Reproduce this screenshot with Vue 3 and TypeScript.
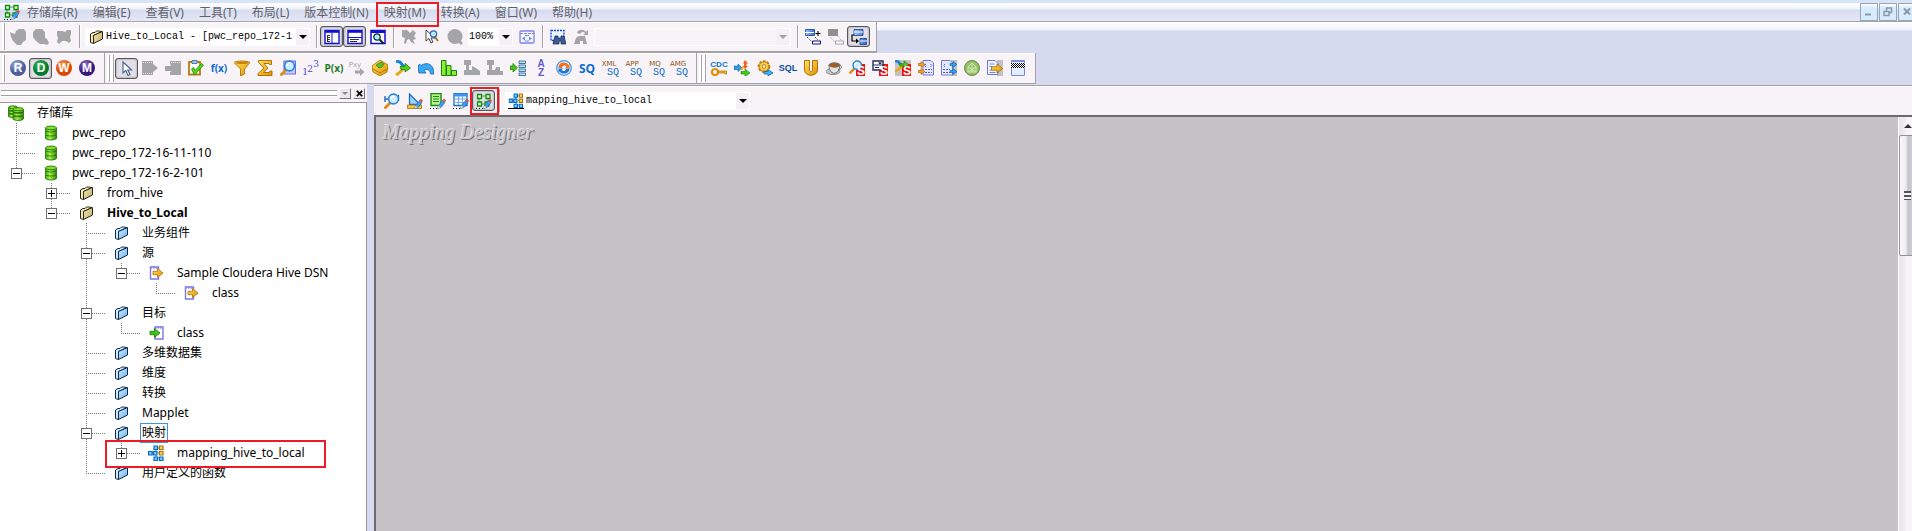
<script setup lang="ts">
import { computed, h, ref } from 'vue'

interface TreeNode {
  label: string
  icon: string
  bold?: boolean
  selected?: boolean
  marked?: boolean
  open?: boolean
  children?: TreeNode[]
}

interface TreeRow {
  node: TreeNode
  depth: number
  guides: string[]
}

interface Tool {
  icon: string
  title: string
  pressed?: boolean
}

interface Letter {
  text: string
  x: number
  y: number
  kind: string
}

const sq = (name: string): Letter[] => [
  { text: name, x: 7, y: 6, kind: 'l-tiny l-brown' },
  { text: 'SQ', x: 11, y: 15, kind: 'l-small l-blue' },
]

// Lettering drawn on top of an icon's shape, in icon units; text is centred on x.
const letters: Record<string, Letter[]> = {
  'app-r': [{ text: 'R', x: 8, y: 12, kind: 'l-app' }],
  'app-d': [{ text: 'D', x: 8, y: 12, kind: 'l-app' }],
  'app-w': [{ text: 'W', x: 8, y: 12, kind: 'l-app' }],
  'app-m': [{ text: 'M', x: 8, y: 12, kind: 'l-app' }],
  fx: [{ text: 'f(x)', x: 8, y: 12, kind: 'l-fn l-blue' }],
  px: [{ text: 'P(x)', x: 8, y: 12, kind: 'l-fn l-green' }],
  pxy: [{ text: 'Pxy', x: 6, y: 7, kind: 'l-tiny l-off' }],
  sequence: [
    { text: '1', x: 2, y: 15, kind: 'l-num' },
    { text: '2', x: 7, y: 12, kind: 'l-num' },
    { text: '3', x: 13, y: 7, kind: 'l-num' },
  ],
  az: [
    { text: 'A', x: 8, y: 7, kind: 'l-az' },
    { text: 'Z', x: 8, y: 16, kind: 'l-az' },
  ],
  sq: [{ text: 'SQ', x: 8, y: 13, kind: 'l-sq' }],
  'sq-xml': sq('XML'),
  'sq-app': sq('APP'),
  'sq-mq': sq('MQ'),
  'sq-amg': sq('AMG'),
  cdc: [{ text: 'CDC', x: 8, y: 7, kind: 'l-cdc' }],
  sql: [{ text: 'SQL', x: 8, y: 11, kind: 'l-sql' }],
  'lookup-s': [{ text: 'S', x: 12, y: 15, kind: 'l-s' }],
  'form-s': [{ text: 'S', x: 12, y: 15, kind: 'l-s' }],
  'merge-s': [{ text: 'S', x: 12, y: 15, kind: 'l-s' }],
}

const Icon = (props: { name: string }) =>
  h('svg', { class: 'ico', viewBox: '0 0 16 16', 'aria-hidden': 'true' }, [
    h('use', { href: '#' + props.name }),
    ...(letters[props.name] ?? []).map((l) =>
      h('text', { x: l.x, y: l.y, class: l.kind, 'text-anchor': 'middle' }, l.text),
    ),
  ])

const menus = [
  '存储库(R)', '编辑(E)', '查看(V)', '工具(T)', '布局(L)',
  '版本控制(N)', '映射(M)', '转换(A)', '窗口(W)', '帮助(H)',
]
const markedMenu = '映射(M)'

const tool = (icon: string, title: string, pressed = false): Tool => ({ icon, title, pressed })

const connectTools = [tool('hand', 'Connect'), tool('hand2', 'Disconnect'), tool('hand3', 'Save')]
const viewTools = [
  tool('navigator', 'Navigator', true),
  tool('output', 'Output', true),
  tool('overview', 'Overview'),
]
const zoomTools = [tool('select-off', 'Select'), tool('zoom-select', 'Zoom'), tool('ball', 'Zoom out')]
const findTools = [tool('find', 'Find'), tool('find-next', 'Find next')]
const linkTools = [
  tool('link-add', 'Add link'),
  tool('link-off', 'Remove link'),
  tool('link-show', 'Show links', true),
]

const appTools = [
  tool('app-r', 'Repository Manager'),
  tool('app-d', 'Designer', true),
  tool('app-w', 'Workflow Manager'),
  tool('app-m', 'Workflow Monitor'),
]
const transformTools = [
  tool('cursor', 'Select', true), tool('source-off', 'Source'), tool('target-off', 'Target'),
  tool('check', 'Validate'), tool('fx', 'Expression'), tool('filter', 'Filter'),
  tool('sigma', 'Aggregator'), tool('lookup', 'Lookup'), tool('sequence', 'Sequence'),
  tool('px', 'Procedure'), tool('pxy', 'External procedure'), tool('box', 'Joiner'),
  tool('router', 'Router'), tool('undo', 'Update strategy'), tool('rank', 'Rank'),
  tool('norm-off', 'Normalizer'), tool('norm-off2', 'Mapplet input'), tool('rows', 'Mapplet output'),
  tool('az', 'Sorter'), tool('globe', 'Transaction'), tool('sq', 'Source qualifier'),
  tool('sq-xml', 'XML source qualifier'), tool('sq-app', 'Application source qualifier'),
  tool('sq-mq', 'MQ source qualifier'), tool('sq-amg', 'AMG source qualifier'),
]
const customTools = [
  tool('cdc', 'CDC'), tool('cross', 'Custom'), tool('gear', 'Service'), tool('sql', 'SQL'),
  tool('union', 'Union'), tool('cup', 'Java'), tool('lookup-s', 'SAP lookup'),
  tool('form-s', 'SAP form'), tool('merge-s', 'SAP merge'), tool('xml-in', 'XML parser'),
  tool('xml-out', 'XML generator'), tool('mask', 'Masking'), tool('export', 'Export'),
  tool('unstructured', 'Unstructured data'),
]
const designerTools = [
  tool('src-analyzer', 'Source Analyzer'),
  tool('target-designer', 'Target Designer'),
  tool('trans-dev', 'Transformation Developer'),
  tool('mapplet-designer', 'Mapplet Designer'),
]

const tree = ref<TreeNode>({
  label: '存储库', icon: 'db2', open: true,
  children: [
    { label: 'pwc_repo', icon: 'db' },
    { label: 'pwc_repo_172-16-11-110', icon: 'db' },
    {
      label: 'pwc_repo_172-16-2-101', icon: 'db', open: true,
      children: [
        { label: 'from_hive', icon: 'folder', open: false, children: [] },
        {
          label: 'Hive_to_Local', icon: 'folder', bold: true, open: true,
          children: [
            { label: '业务组件', icon: 'folder-blue' },
            {
              label: '源', icon: 'folder-blue', open: true,
              children: [
                {
                  label: 'Sample Cloudera Hive DSN', icon: 'src', open: true,
                  children: [{ label: 'class', icon: 'src' }],
                },
              ],
            },
            {
              label: '目标', icon: 'folder-blue', open: true,
              children: [{ label: 'class', icon: 'tgt' }],
            },
            { label: '多维数据集', icon: 'folder-blue' },
            { label: '维度', icon: 'folder-blue' },
            { label: '转换', icon: 'folder-blue' },
            { label: 'Mapplet', icon: 'folder-blue' },
            {
              label: '映射', icon: 'folder-blue', selected: true, open: true,
              children: [
                { label: 'mapping_hive_to_local', icon: 'mapping', marked: true, open: false, children: [] },
              ],
            },
            { label: '用户定义的函数', icon: 'folder-blue' },
          ],
        },
      ],
    },
  ],
})

function flatten(node: TreeNode, depth: number, guides: string[], trail: string[]): TreeRow[] {
  const rows: TreeRow[] = [{ node, depth, guides }]
  if (!node.open) return rows
  const kids = node.children ?? []
  kids.forEach((kid, i) => {
    const last = i === kids.length - 1
    rows.push(
      ...flatten(kid, depth + 1, [...trail, last ? 'end' : 'tee'], [...trail, last ? 'none' : 'line']),
    )
  })
  return rows
}

const rows = computed(() => flatten(tree.value, 0, [], []))
</script>

<template>
  <div class="app">
    <svg class="defs" aria-hidden="true">
      <defs>
        <linearGradient id="g-green" x1="0" x2="1"><stop offset="0" stop-color="#3cb30a" /><stop offset=".4" stop-color="#a6f04a" /><stop offset="1" stop-color="#2a8a06" /></linearGradient>
        <linearGradient id="g-tan" x1="0" x2="1" y2="1"><stop offset="0" stop-color="#f2ecc4" /><stop offset="1" stop-color="#bfa95c" /></linearGradient>
        <linearGradient id="g-blue" x1="0" x2="1" y2="1"><stop offset="0" stop-color="#d6efff" /><stop offset="1" stop-color="#5fb0f0" /></linearGradient>
        <linearGradient id="g-gold" x1="0" x2="1" y2="1"><stop offset="0" stop-color="#ffe25a" /><stop offset="1" stop-color="#e09000" /></linearGradient>
        <linearGradient id="g-win" x1="0" x2="1"><stop offset="0" stop-color="#a9c6fa" /><stop offset="1" stop-color="#3264cc" /></linearGradient>
        <radialGradient id="g-r" cx=".4" cy=".3"><stop offset="0" stop-color="#a9b8e0" /><stop offset="1" stop-color="#4a5c9c" /></radialGradient>
        <radialGradient id="g-d" cx=".4" cy=".3"><stop offset="0" stop-color="#3cbc5c" /><stop offset="1" stop-color="#057a2c" /></radialGradient>
        <radialGradient id="g-w" cx=".4" cy=".3"><stop offset="0" stop-color="#ff9a4c" /><stop offset="1" stop-color="#d84800" /></radialGradient>
        <radialGradient id="g-m" cx=".4" cy=".3"><stop offset="0" stop-color="#9474c8" /><stop offset="1" stop-color="#38167c" /></radialGradient>
      </defs>

      <!-- shared parts -->
      <symbol id="p-pencil" viewBox="0 0 16 16"><path d="M7.500 15.500l1-3 4-5 2.500 2-4 5z" fill="#3b9cf0" stroke="#1560b0" stroke-width=".6" /><path d="M12.500 7.500l1.300-1.700 2.200 1.700-1.200 1.800z" fill="#f04a28" /><path d="M7.500 15.500l1-3 2 2z" fill="#f7d9a0" /></symbol>
      <symbol id="p-dots" viewBox="0 0 16 16"><path d="M0 15h1v1H0zM3 15h1v1H3zM6 15h1v1H6z" fill="#000" /></symbol>
      <symbol id="p-lens" viewBox="0 0 16 16"><path d="M1.500 14.500L6 10" stroke="#d89020" stroke-width="3" stroke-linecap="round" /><circle cx="9.500" cy="6" r="4.900" fill="#cdeeff" stroke="#2a84d8" stroke-width="1.600" /><path d="M7 6a3 3 0 0 1 3-3" stroke="#fff" fill="none" stroke-width="1.400" /></symbol>

      <symbol id="designer" viewBox="0 0 16 16"><path d="M5 3h6M3 5v5M12 5v4M5 11h4" stroke="#38a838" stroke-width="1" /><g fill="#dff8d0" stroke="#128a12" stroke-width="1.300"><path d="M1.500 1.500h4v4h-4zM10 1.500h4v4h-4zM1.500 9h4v4h-4zM9 9h4v4H9z" /></g><use href="#p-pencil" /><use href="#p-dots" /></symbol>
      <symbol id="mapping" viewBox="0 0 16 16"><path d="M4 8h3M8 3v9M10 8h3M8 3h5M8 13h5" stroke="#5c7ca0" /><g stroke-width="1.200"><path d="M.600 6.500h3.500V10H.600zM5.500 6.500H9V10H5.500zM6 1h3.500v3.500H6zM6 12h3.500v3.500H6zM11.500 12H15v3.500h-3.500z" fill="#6fd0ff" stroke="#0a6cc0" /><path d="M11.500 1H15v3.500h-3.500zM11.500 6.500H15V10h-3.500z" fill="#ffd870" stroke="#a87408" /></g></symbol>
      <symbol id="db" viewBox="0 0 16 16"><g stroke="#1f6a04" stroke-width=".8" fill="url(#g-green)"><path d="M2.500 10v3.500c2 2 9 2 11 0V10z" /><path d="M2.500 6v3.500c2 2 9 2 11 0V6z" /><path d="M2.500 3v2.500c2 2 9 2 11 0V3z" /><ellipse cx="8" cy="2.900" rx="5.500" ry="1.900" fill="#7fe02c" /></g></symbol>
      <symbol id="db2" viewBox="0 0 16 16"><g stroke="#1f6a04" stroke-width=".8" fill="url(#g-green)"><path d="M.500 8.500v3c1.500 1.500 7 1.500 8.500 0v-3zM.500 5.500v2.800c1.500 1.500 7 1.500 8.500 0V5.500zM.500 2.500v2.800c1.500 1.500 7 1.500 8.500 0V2.500z" /><ellipse cx="5" cy="2.300" rx="4.500" ry="1.500" /><path d="M5 11v3c2 2 8.500 2 10.500 0v-3zM5 7.500v3c2 1.800 8.500 1.800 10.500 0v-3zM5 4.500V7c2 1.800 8.500 1.800 10.500 0V4.500z" /><ellipse cx="10.300" cy="4.200" rx="5.200" ry="1.600" fill="#7fe02c" /></g></symbol>
      <symbol id="folder" viewBox="0 0 16 16"><path d="M5.500 14.500l-3-1V5L5 3.500h2L8.500 2h2l3.500.500-8.500 4z" fill="#f0e8bc" stroke="#2c2810" /><path d="M5.500 6.500l9-4V10l-9 4.500z" fill="url(#g-tan)" stroke="#2c2810" /></symbol>
      <symbol id="folder-blue" viewBox="0 0 16 16"><path d="M5.500 14.500l-3-1V5L5 3.500h2L8.500 2h2l3.500.500-8.500 4z" fill="#cdeaff" stroke="#102848" /><path d="M5.500 6.500l9-4V10l-9 4.500z" fill="url(#g-blue)" stroke="#102848" /></symbol>
      <symbol id="src" viewBox="0 0 16 16"><path d="M2.500 2h8v12h-8z" fill="#fff" stroke="#7878e8" stroke-width="1.400" /><path d="M2.500 2.500h8" stroke="#8c8cf0" stroke-width="2.400" stroke-dasharray="1.500 1" /><path d="M5 6.300h4.500V3.500L15 8l-5.500 4.500V9.700H5z" fill="url(#g-gold)" stroke="#b06c00" stroke-width=".8" /></symbol>
      <symbol id="tgt" viewBox="0 0 16 16"><path d="M7 2h8v12H7z" fill="#fff" stroke="#7878e8" stroke-width="1.400" /><path d="M7 2.500h8" stroke="#8c8cf0" stroke-width="2.400" stroke-dasharray="1.500 1" /><path d="M2 6.300h4.500V3.500L12 8l-5.500 4.500V9.700H2z" fill="#44c414" stroke="#147a04" stroke-width=".8" /></symbol>

      <symbol id="hand" viewBox="0 0 16 16"><path d="M0 3l2 1 3 1 1-3 3-2h5l2 3v8l-3 2-2 3H7l-4-4-2-4z" fill="#a5a5a5" /></symbol>
      <symbol id="hand2" viewBox="0 0 16 16"><path d="M0 3l3-3h6l3 3v6l2 1 2 4-2 2-3-1H7l-4-3-3-4z" fill="#a5a5a5" /></symbol>
      <symbol id="hand3" viewBox="0 0 16 16"><path d="M1 2h5l3 1 2-2h4v4l-1 3 1 4-2 2-3-2H6l-3 3-2-2 1-4-1-3z" fill="#a5a5a5" /></symbol>
      <symbol id="navigator" viewBox="0 0 16 16"><path d="M1 1.500h14v13H1z" fill="#fff" stroke="#1010d0" stroke-width="1.400" /><path d="M1 2.500h14" stroke="#1010d0" stroke-width="2.600" /><path d="M8 4v10" stroke="#1010d0" /><path d="M3.500 6v7M4 6.500h2M4 8.500h2M4 10.500h2M4 12.500h2" stroke="#000" stroke-width=".8" /></symbol>
      <symbol id="output" viewBox="0 0 16 16"><path d="M1 1.500h14v13H1z" fill="#fff" stroke="#1010d0" stroke-width="1.400" /><path d="M1 2.500h14" stroke="#1010d0" stroke-width="2.600" /><path d="M1 8.500h14" stroke="#1010d0" /><path d="M3 10.500h9M3 12.500h7" stroke="#000" stroke-width=".8" /></symbol>
      <symbol id="overview" viewBox="0 0 16 16"><path d="M1 1.500h14v13H1z" fill="#fff" stroke="#1010d0" stroke-width="1.500" /><path d="M1 2.500h14" stroke="#1010d0" stroke-width="3" /><circle cx="7" cy="8" r="3.200" fill="#a8f0ff" stroke="#112233" stroke-width="1.200" /><path d="M9.500 10.500l4 4" stroke="#112233" stroke-width="2" /></symbol>
      <symbol id="select-off" viewBox="0 0 16 16"><path d="M1 1h5l3 3 3-3 3 3-2 3 2 3-3 1 2 4-4-2-2-3-2 1-1 4-2-1 1-5-3-1z" fill="#a5a5a5" /></symbol>
      <symbol id="zoom-select" viewBox="0 0 16 16"><path d="M2 1v11l3-2.500L7 14l2-1-2-4h4z" fill="#fff" stroke="#333" stroke-width=".9" /><path d="M11 8l3 4" stroke="#b06c28" stroke-width="2" /><circle cx="9.500" cy="5" r="3.200" fill="#bfe6ff" stroke="#2a64a8" stroke-width="1.200" /></symbol>
      <symbol id="ball" viewBox="0 0 16 16"><circle cx="8" cy="7.500" r="7.500" fill="#a5a5a5" /><path d="M11 11l4 4" stroke="#a5a5a5" stroke-width="3" /></symbol>
      <symbol id="fit" viewBox="0 0 16 16"><rect x="1" y="2" width="14" height="12" rx="1" fill="#f4f6ff" stroke="#7c84ec" stroke-width="1.300" /><path d="M1 4.500h14" stroke="#7c84ec" stroke-dasharray="3 1" /><path d="M6 7.500L3 9.500l3 2zM10 7.500l3 2-3 2z" fill="#7c84ec" /><path d="M6 6.500h4M6 12h4" stroke="#7c84ec" /></symbol>
      <symbol id="find" viewBox="0 0 16 16"><path d="M1 1.500h13v10H1z" fill="#e8f4ff" stroke="#1848d0" stroke-width="1.400" stroke-dasharray="2 1" /><path d="M5 7h3v2h3V7h3l2 8h-5v-3H9v3H3z" fill="#3c5c98" stroke="#122850" stroke-width=".7" /></symbol>
      <symbol id="find-next" viewBox="0 0 16 16"><path d="M4 4c1-4 7-4 9-1l2-2v5h-5l2-2c-1-2-4-1-5 1zM3 9l3-2h6l2 8h-4v-3H7v3H1z" fill="#a5a5a5" /></symbol>
      <symbol id="link-add" viewBox="0 0 16 16"><path d="M.500.500h9v6h-9z" fill="url(#g-win)" stroke="#12408c" stroke-width=".8" /><path d="M0 3.500h9" stroke="#fff" /><path d="M13 2v5M10.500 4.500h5" stroke="#000" /><path d="M2 8l5 5M10 8l3 3" stroke="#000" stroke-dasharray="1 1.500" /><path d="M7.500 12h8v3h-8z" fill="#fff" stroke="#101080" /></symbol>
      <symbol id="link-off" viewBox="0 0 16 16"><path d="M0 0h10v7H0z" fill="#909090" /><path d="M2 8l5 5M10 7l3 4" stroke="#a5a5a5" stroke-dasharray="1 1" /><path d="M7.500 12h8v3h-8z" fill="#fff" stroke="#a5a5a5" /></symbol>
      <symbol id="link-show" viewBox="0 0 16 16"><path d="M3 .500h9v6H3zM9 9.500h6.500v6H9z" fill="url(#g-win)" stroke="#12408c" stroke-width=".8" /><path d="M3 3h9M9 12h7" stroke="#fff" /><path d="M3 6H1v6h5" fill="none" stroke="#000" stroke-width="1.200" /><path d="M5 9.500l3 2.500-3 2.500z" /></symbol>

      <symbol id="app-r" viewBox="0 0 16 16"><circle cx="8" cy="8" r="8" fill="url(#g-r)" /></symbol>
      <symbol id="app-d" viewBox="0 0 16 16"><circle cx="8" cy="8" r="8" fill="url(#g-d)" /></symbol>
      <symbol id="app-w" viewBox="0 0 16 16"><circle cx="8" cy="8" r="8" fill="url(#g-w)" /></symbol>
      <symbol id="app-m" viewBox="0 0 16 16"><circle cx="8" cy="8" r="8" fill="url(#g-m)" /></symbol>

      <symbol id="cursor" viewBox="0 0 16 16"><path d="M4 2v11l2.800-2.500L9 15.500l2-1-2.200-4.500H12.500z" fill="#fff" stroke="#4c6c94" stroke-width="1.200" /></symbol>
      <symbol id="source-off" viewBox="0 0 16 16"><path d="M0 1h11v3l5 4-5 4v3H0z" fill="#a5a5a5" /><path d="M1 2.500h9M1 13.500h9" stroke="#e8e8e8" stroke-dasharray="1 1" /></symbol>
      <symbol id="target-off" viewBox="0 0 16 16"><path d="M5 1h11v14H5v-3l2-1H0V6h6L5 4z" fill="#a5a5a5" /><path d="M6 2.500h9" stroke="#e8e8e8" stroke-dasharray="1 1" /></symbol>
      <symbol id="check" viewBox="0 0 16 16"><path d="M1 2h11v12.500H1z" fill="#fff" stroke="#b87c10" stroke-width="1.800" /><path d="M4 .500h5v3H4z" fill="#9cc8f0" stroke="#2864a0" stroke-width=".8" /><path d="M3.500 9L6.500 15 15.500 5 13.500 3.500 7 10.500 5.500 7.500z" fill="#54dc14" stroke="#188404" stroke-width=".8" /></symbol>
      <symbol id="filter" viewBox="0 0 16 16"><path d="M0 2.500C2 .500 14 .500 16 2.500L10.500 9v5L6.500 16V9z" fill="url(#g-gold)" stroke="#a86800" stroke-width=".8" /><ellipse cx="8" cy="2.800" rx="6.500" ry="1.300" fill="#c88400" /></symbol>
      <symbol id="sigma" viewBox="0 0 16 16"><path d="M1.500.500h13v4h-2L12 3.500H7L11 8l-4.500 4.500h6l.5-1.500h2v4.500h-14v-2L7 8 1.500 2.500z" fill="url(#g-gold)" stroke="#a86800" stroke-width=".9" /></symbol>
      <symbol id="lookup" viewBox="0 0 16 16"><path d="M4 1h11.500v13H4z" fill="#c8ccff" stroke="#6c70e0" stroke-width="1.200" /><use href="#p-lens" /></symbol>
      <symbol id="pxy" viewBox="0 0 16 16"><path d="M6 10.500h5V8l4.500 4-4.500 4v-2.500H6z" fill="#a5a5a5" /></symbol>
      <symbol id="box" viewBox="0 0 16 16"><path d="M0 6l8-6 8 5-1 7-7 4-7-4z" fill="url(#g-gold)" stroke="#a86800" stroke-width=".8" /><path d="M4 5l5-3 3 2-2 3-3 1z" fill="#58bc28" stroke="#208008" stroke-width=".6" /><path d="M1 9l7 4 7-4" fill="none" stroke="#b07c08" /></symbol>
      <symbol id="router" viewBox="0 0 16 16"><path d="M1 1l4 1 4 5" fill="none" stroke="#1484dc" stroke-width="3" /><path d="M1 15l3-2 5-5" fill="none" stroke="#e8a810" stroke-width="3" /><path d="M5 6.500h5V3.500L15.500 8 10 12V9.500H6z" fill="#58cc20" stroke="#188404" stroke-width=".8" /></symbol>
      <symbol id="undo" viewBox="0 0 16 16"><path d="M0 6l1 7h7L6 10.500c3-2 6-1 6.500 3.500H16C16 5 10 1 3 5.500L1.500 4z" fill="#38a8f4" stroke="#0c64b4" stroke-width=".8" /></symbol>
      <symbol id="rank" viewBox="0 0 16 16"><path d="M.500.500H5v15H.500zM5.500 5.500H10v10H5.500zM10.500 10.500h5v5h-5z" fill="#8cec3c" stroke="#188404" /></symbol>
      <symbol id="norm-off" viewBox="0 0 16 16"><path d="M0 0h7v5H5v5h3V6l4 2 4 3v4H0v-5h2V5H0z" fill="#a5a5a5" /></symbol>
      <symbol id="norm-off2" viewBox="0 0 16 16"><path d="M0 0h7v5H5v5h3l1-3h4v4h3v4H0v-5h2V5H0z" fill="#a5a5a5" /></symbol>
      <symbol id="rows" viewBox="0 0 16 16"><path d="M0 6h3V3.500L7.500 8 3 12V9.500H0z" fill="#44c414" stroke="#147a04" stroke-width=".7" /><g fill="#b8e4ff" stroke="#3c6c90" stroke-width=".9"><path d="M9 1h6.500v2.500H9zM9 5h6.500v2.500H9zM9 9h6.500v2.500H9zM9 13h6.500v2.500H9z" /></g></symbol>
      <symbol id="globe" viewBox="0 0 16 16"><circle cx="8" cy="8" r="7.300" fill="#e0f0ff" stroke="#4c98e0" stroke-width="1.300" /><path d="M2.500 8c0-6 7-7 10-3l1-1v4.500H9l1.500-2C9 4.500 6 5.500 6 8z" fill="#f07020" /><path d="M13.500 8.500c0 5.500-7 6.500-10 3l-1 1V8.500H7L5.500 10c2 2 4.500 1 4.500-1z" fill="#1c74d4" /></symbol>

      <symbol id="cdc" viewBox="0 0 16 16"><circle cx="4" cy="12" r="3" fill="none" stroke="#e0940c" stroke-width="2.200" /><path d="M7 11h9v3h-2v-1H7z" fill="#f0b020" stroke="#a86800" stroke-width=".6" /></symbol>
      <symbol id="cross" viewBox="0 0 16 16"><path d="M0 6h4V4l4 4-4 3.500V9.500H0z" fill="#2c9cec" stroke="#0c5ca8" stroke-width=".6" /><path d="M9 3.500L11 0l3 3.500h-1.500V6H14l-3 3-2.500-3H10V3.500z" fill="#f45c20" /><path d="M7 11.500h4V9l5 4-5 3.500V14H7z" fill="#48c818" stroke="#188404" stroke-width=".6" /><path d="M9 7l-2 3" stroke="#e8a810" stroke-width="2" /></symbol>
      <symbol id="gear" viewBox="0 0 16 16"><circle cx="7" cy="6.500" r="5.200" fill="#f4c040" stroke="#c07c0c" stroke-width="2.200" stroke-dasharray="2.600 1.200" /><circle cx="7" cy="6.500" r="4.600" fill="#f8cc54" stroke="#c07c0c" stroke-width=".7" /><circle cx="7" cy="6.500" r="1.800" fill="#fff4d0" stroke="#c07c0c" /><path d="M7 11.500h4V9.500l5 3.500-5 3V14H7z" fill="#38b4f0" stroke="#0c5ca8" stroke-width=".7" /></symbol>
      <symbol id="union" viewBox="0 0 16 16"><path d="M1.500.500h5V10c0 2 3 2 3 0V.500h5V10c0 7-13 7-13 0z" fill="url(#g-gold)" stroke="#a86800" stroke-width=".9" /></symbol>
      <symbol id="cup" viewBox="0 0 16 16"><ellipse cx="7" cy="11.500" rx="7" ry="3" fill="#c8c8c8" stroke="#787878" stroke-width=".8" /><path d="M3 5c0 11 10 11 11 0z" fill="#e4e4e4" stroke="#707070" /><ellipse cx="8.500" cy="5" rx="5.500" ry="2.200" fill="#a85c18" stroke="#707070" /><path d="M14 5.500c3 0 2 4-2 4" fill="none" stroke="#707070" /></symbol>
      <symbol id="lookup-s" viewBox="0 0 16 16"><path d="M7 4h9v12H7z" fill="#f01010" /><use href="#p-lens" width="14" height="14" /></symbol>
      <symbol id="form-s" viewBox="0 0 16 16"><path d="M7 4h9v12H7z" fill="#f01010" /><path d="M1 1h10v9H1z" fill="#fff" stroke="#28286c" stroke-width="1.400" /><path d="M1 5h10M3 7.500h4" stroke="#28286c" /><path d="M6 2.500h4l-2 2z" /></symbol>
      <symbol id="merge-s" viewBox="0 0 16 16"><path d="M0 0h16v16H0z" fill="#c4c0c4" /><path d="M7 4h9v12H7z" fill="#f01010" /><path d="M0 1l3 .500 4 4" fill="none" stroke="#1484dc" stroke-width="2.500" /><path d="M0 11l3-1 4-4" fill="none" stroke="#e8a810" stroke-width="2.500" /><path d="M4 4h5V1l4.500 3.500L9 8V6H5z" fill="#58cc20" stroke="#188404" stroke-width=".8" /></symbol>
      <symbol id="xml-in" viewBox="0 0 16 16"><path d="M5 .500h8l2.500 2.500v12H5z" fill="#e4e8ff" stroke="#7078e0" /><path d="M8 4l-1.500 1.500L8 7M12.500 4L14 5.500 12.500 7M7 9.500h7M7 12.500h7" fill="none" stroke="#5860c8" stroke-dasharray="2 1" /><path d="M0 3.500h3V1.500L7 4.500 3 7.500v-2H0zM0 10.500h3v-2l4 3-4 3v-2H0z" fill="#f4a020" stroke="#b05c00" stroke-width=".6" /></symbol>
      <symbol id="xml-out" viewBox="0 0 16 16"><path d="M10 0h6v16h-6z" fill="#c4c0c4" /><path d="M.500.500H9L11.500 3v12H.500z" fill="#e4e8ff" stroke="#7078e0" /><path d="M4 4L2.500 5.500 4 7M2 9.500h7M2 12.500h7" fill="none" stroke="#5860c8" stroke-dasharray="2 1" /><path d="M9 3.500h3V1.500l4 3-4 3v-2H9zM9 10.500h3v-2l4 3-4 3v-2H9z" fill="#28a8f0" stroke="#0c5ca8" stroke-width=".6" /></symbol>
      <symbol id="mask" viewBox="0 0 16 16"><circle cx="8" cy="8" r="7.500" fill="#98c068" stroke="#64883c" /><path d="M8 3l4 4v5H4V7zM8 3v9M4 7l8 5M12 7l-8 5" fill="none" stroke="#d8ecb8" stroke-width=".9" /></symbol>
      <symbol id="export" viewBox="0 0 16 16"><path d="M10 0h6v16h-6z" fill="#c4c0c4" /><path d="M.500.500H8L11 3.500v11H.500z" fill="#f0f4ff" stroke="#7078e0" /><path d="M2.500 4h5M2.500 6.500h3M2.500 10h3M2.500 12.500h6" stroke="#7888e0" /><path d="M4.500 6.800H10V4l5.500 4.500L10 13v-2.800H4.500z" fill="url(#g-gold)" stroke="#a86800" stroke-width=".8" /></symbol>
      <symbol id="unstructured" viewBox="0 0 16 16"><path d="M1.500.500h13v15h-13z" fill="#e4ecff" stroke="#7888dc" /><path d="M1.500 1h13" stroke="#7890e0" stroke-width="2" /><path d="M1 3.500h14v4H1z" fill="#fff" /><path d="M1 3.500h14M1 5.500h14M1 7.500h14" stroke="#000" stroke-dasharray="1 1" /><path d="M2 4.500h13M2 6.500h13" stroke="#000" stroke-dasharray="1 1" /></symbol>

      <symbol id="src-analyzer" viewBox="0 0 16 16"><path d="M1 3v6M1 6h3M14.500 2v6" stroke="#2464c8" stroke-width="1.400" /><use href="#p-lens" /></symbol>
      <symbol id="target-designer" viewBox="0 0 16 16"><path d="M2.500 1v10.500H13z" fill="#9cd4ff" stroke="#1c6cc4" stroke-width="1.300" /><path d="M.500 12h14v3.500H.500z" fill="#f8c838" stroke="#a87408" stroke-width=".8" /><use href="#p-pencil" /></symbol>
      <symbol id="trans-dev" viewBox="0 0 16 16"><path d="M1 .500h10v12H1z" fill="#b8f08c" stroke="#188c14" stroke-width="1.400" /><path d="M3 3.500h6M3 6h6M3 8.500h6" stroke="#188c14" /><use href="#p-pencil" /><use href="#p-dots" /></symbol>
      <symbol id="mapplet-designer" viewBox="0 0 16 16"><path d="M1 .500h13v12H1z" fill="#fff" stroke="#1c6cc4" stroke-width="1.300" /><path d="M1 2h13" stroke="#3c94ec" stroke-width="3" /><path d="M1 6h13M1 9.500h13M5.500 3v9M9.500 3v9" stroke="#6ca8e4" /><use href="#p-pencil" /><use href="#p-dots" /></symbol>
    </svg>

    <header class="menubar">
      <Icon name="designer" />
      <nav class="menus">
        <button v-for="m in menus" :key="m" type="button" class="menu" :class="{ marked: m === markedMenu }">{{ m }}</button>
      </nav>
      <div class="winbtns">
        <button type="button" class="winbtn" aria-label="Minimize"><svg viewBox="0 0 16 16"><path d="M4 10.500h6" stroke-width="2" /></svg></button>
        <button type="button" class="winbtn" aria-label="Restore"><svg viewBox="0 0 16 16"><path d="M4 7.500h5v4H4zM6.500 7V4h5v4.500H9.500" stroke-width="1.500" /></svg></button>
        <button type="button" class="winbtn" aria-label="Close"><svg viewBox="0 0 16 16"><path d="M5 4.500l6 6M11 4.500l-6 6" stroke-width="2" /></svg></button>
      </div>
    </header>

    <div class="band top">
      <div class="group" role="toolbar" aria-label="Standard">
        <span class="grip"></span>
        <button v-for="t in connectTools" :key="t.icon" type="button" class="tool" :title="t.title"><Icon :name="t.icon" /></button>
        <span class="sep"></span>
        <label class="combo repo">
          <Icon name="folder" />
          <select aria-label="Folder"><option>Hive_to_Local - [pwc_repo_172-1</option></select>
          <span class="arrow"></span>
        </label>
        <span class="sep"></span>
        <button v-for="t in viewTools" :key="t.icon" type="button" class="tool" :class="{ pressed: t.pressed }" :title="t.title"><Icon :name="t.icon" /></button>
        <span class="sep"></span>
        <button v-for="t in zoomTools" :key="t.icon" type="button" class="tool" :title="t.title"><Icon :name="t.icon" /></button>
        <label class="combo scale">
          <select aria-label="Zoom"><option>100%</option></select>
          <span class="arrow"></span>
        </label>
        <button type="button" class="tool" title="Fit"><Icon name="fit" /></button>
        <span class="sep"></span>
        <button v-for="t in findTools" :key="t.icon" type="button" class="tool" :title="t.title"><Icon :name="t.icon" /></button>
        <label class="combo search off">
          <select aria-label="Search" disabled><option></option></select>
          <span class="arrow"></span>
        </label>
        <span class="sep"></span>
        <button v-for="t in linkTools" :key="t.icon" type="button" class="tool" :class="{ pressed: t.pressed }" :title="t.title"><Icon :name="t.icon" /></button>
      </div>
    </div>

    <div class="band">
      <div class="group" role="toolbar" aria-label="Applications">
        <span class="grip"></span>
        <button v-for="t in appTools" :key="t.icon" type="button" class="tool" :class="{ pressed: t.pressed }" :title="t.title"><Icon :name="t.icon" /></button>
      </div>
      <div class="group" role="toolbar" aria-label="Transformations">
        <span class="grip double"></span>
        <button v-for="t in transformTools" :key="t.icon" type="button" class="tool" :class="{ pressed: t.pressed }" :title="t.title"><Icon :name="t.icon" /></button>
      </div>
      <div class="group" role="toolbar" aria-label="Advanced transformations">
        <span class="grip double"></span>
        <button v-for="t in customTools" :key="t.icon" type="button" class="tool" :title="t.title"><Icon :name="t.icon" /></button>
      </div>
    </div>

    <main class="body">
      <aside class="side">
        <div class="side-head">
          <span class="side-grip"></span>
          <button type="button" class="mini" aria-label="Options"><span class="caret"></span></button>
          <button type="button" class="mini" aria-label="Close"><svg viewBox="0 0 8 8"><path d="M1 1l6 6M7 1L1 7" /></svg></button>
        </div>
        <ul class="tree" role="tree">
          <li v-for="(row, i) in rows" :key="i" class="row" :class="{ boxed: row.node.marked }" role="treeitem" :aria-level="row.depth + 1">
            <span v-for="(g, k) in row.guides" :key="k" class="guide" :class="g">
              <button
                v-if="k === row.depth - 1 && row.node.children"
                type="button"
                class="toggle"
                :class="{ plus: !row.node.open }"
                :aria-label="row.node.open ? 'Collapse' : 'Expand'"
                @click="row.node.open = !row.node.open"
              ></button>
            </span>
            <span class="node-ico"><Icon :name="row.node.icon" /></span>
            <span class="label" :class="{ bold: row.node.bold, selected: row.node.selected }">{{ row.node.label }}</span>
          </li>
        </ul>
      </aside>

      <section class="work">
        <div class="work-tools" role="toolbar" aria-label="Designer">
          <button v-for="t in designerTools" :key="t.icon" type="button" class="tool" :title="t.title"><Icon :name="t.icon" /></button>
          <button type="button" class="tool pressed boxed" title="Mapping Designer"><Icon name="designer" /></button>
          <span class="sep"></span>
          <label class="combo mapping">
            <Icon name="mapping" class="under" />
            <select aria-label="Mapping"><option>mapping_hive_to_local</option></select>
            <span class="arrow"></span>
          </label>
        </div>
        <div class="stage">
          <div class="canvas"><h1>Mapping Designer</h1></div>
          <div class="scroll">
            <button type="button" class="up" aria-label="Scroll up"></button>
            <div class="thumb"><span class="ridges"></span></div>
          </div>
        </div>
      </section>
    </main>
  </div>
</template>

<style>
html,
body {
  margin: 0;
  overflow: hidden;
}

/* lettering inside icons */
.ico .l-app {
  font: bold 12px "Liberation Sans", sans-serif;
  fill: #fff;
}
.ico .l-fn {
  font: bold 10px "Open Sans", sans-serif;
}
.ico .l-num {
  font: 9px "DejaVu Serif", serif;
  fill: #4848d8;
}
.ico .l-tiny {
  font: 7px "DejaVu Sans", sans-serif;
}
.ico .l-small {
  font: 10px "Liberation Mono", monospace;
}
.ico .l-az {
  font: bold 10px "Liberation Sans", sans-serif;
  fill: #6458cc;
}
.ico .l-sq {
  font: bold 12px "Open Sans", sans-serif;
  fill: #0a6cd0;
}
.ico .l-cdc {
  font: bold 8px "Liberation Sans", sans-serif;
  fill: #0a78c8;
}
.ico .l-sql {
  font: bold 9px "Liberation Sans", sans-serif;
  fill: #084c9c;
}
.ico .l-s {
  font: bold 12px "Liberation Sans", sans-serif;
  fill: #fff;
}
.ico .l-blue {
  fill: #0a6cd0;
}
.ico .l-green {
  fill: #187c24;
}
.ico .l-brown {
  fill: #8c5410;
}
.ico .l-off {
  fill: #a5a5a5;
}
</style>

<style scoped>
.app {
  display: flex;
  flex-direction: column;
  min-height: 100vh;
  overflow: hidden;
  background: #d6daee;
  color: #000;
  font-family: "Noto Sans", "Noto Sans CJK SC", sans-serif;
  font-size: 12px;
}
.app *,
.app *::after {
  box-sizing: border-box;
}
.defs {
  position: absolute;
  width: 0;
  height: 0;
}
button {
  margin: 0;
  padding: 0;
  border: 0;
  background: none;
  color: inherit;
  font: inherit;
}
.ico {
  flex: none;
  display: block;
  width: 16px;
  height: 16px;
  overflow: visible;
}

/* menu bar */
.menubar {
  display: flex;
  align-items: center;
  height: 22px;
  padding: 3px 0 0 4px;
  border-bottom: 1px solid #a4a4ac;
  background: linear-gradient(#d6e4f5 0 3px, #fff 3px, #f0f2fa 9px, #d6dcee 10px, #dfe2f4 16px, #e6e6f6 21px);
}
.menus {
  display: flex;
  flex: 1;
}
.menu {
  position: relative;
  height: 18px;
  padding: 0 8px 0 7px;
  color: #62626a;
  line-height: 20px;
  white-space: nowrap;
}
.menu.marked::after {
  content: "";
  position: absolute;
  inset: -1px -5px -6px -1px;
  border: 2px solid #ed1c24;
  z-index: 2;
}
.winbtns {
  display: flex;
  gap: 1px;
  margin-right: -4px;
}
.winbtn {
  width: 18px;
  height: 18px;
  border: 1px solid #98a6bc;
  background: linear-gradient(#fff, #d6ebfb 4px);
}
.winbtn svg {
  display: block;
  width: 16px;
  height: 16px;
  fill: none;
  stroke: #8898ae;
}

/* toolbars */
.band {
  display: flex;
  height: 31px;
}
.band.top {
  background: linear-gradient(#fff, #f0f2fc 8px, #d6daee 9px);
}
.group {
  display: flex;
  align-items: center;
  padding-right: 6px;
  border-right: 1px solid #a4a2a6;
  border-bottom: 1px solid #a4a2a6;
  background: #f7f3f7;
  box-shadow: inset 0 1px #fff;
}
.top .group {
  border-bottom-width: 2px;
}
.grip {
  width: 6px;
  height: 27px;
  background: linear-gradient(90deg, transparent 2px, #fff 2px 4px, #a8a6aa 4px 5px, transparent 5px);
}
.grip.double {
  width: 10px;
  background: linear-gradient(90deg, transparent 2px, #fff 2px 4px, #a8a6aa 4px 5px, #fff 5px 8px, #a8a6aa 8px 9px, transparent 9px);
}
.tool {
  flex: none;
  display: flex;
  align-items: center;
  justify-content: center;
  width: 23px;
  height: 21px;
}
.tool.pressed {
  border: 1px solid #56565c;
  border-radius: 3px;
  background: #e2e0e6;
  box-shadow: inset 0 0 2px #77777c;
}
.sep {
  flex: none;
  width: 8px;
  height: 23px;
  background: linear-gradient(90deg, transparent 4px, #a4a2a6 4px 5px, #fff 5px 6px, transparent 6px);
}
.combo {
  display: flex;
  align-items: center;
  height: 18px;
  margin: 0 2px;
  background: #fff;
}
.combo .ico {
  margin: 0 1px 0 3px;
}
.combo select {
  flex: 1;
  min-width: 0;
  height: 18px;
  margin: 0;
  padding: 0 0 1px 1px;
  border: 0;
  outline: 0;
  appearance: none;
  background: transparent;
  color: #000;
  font: 10px "Liberation Mono", monospace;
}
.combo .arrow {
  flex: none;
  display: flex;
  align-items: center;
  justify-content: center;
  width: 13px;
  height: 16px;
  margin-right: 1px;
  background: #f4f0f5;
}
.arrow::after {
  content: "";
  border: 4px solid transparent;
  border-top-color: #000;
  border-bottom: 0;
}
.combo.off {
  border: 1px solid #fff;
  background: #f7f3f7;
}
.combo.off .arrow::after {
  border-top-color: #a4a2a6;
}
.repo {
  width: 225px;
}
.scale {
  width: 45px;
}
.search {
  width: 197px;
}
.mapping {
  width: 245px;
}
.mapping .under {
  border-bottom: 1px solid #000;
}

/* navigator */
.body {
  display: flex;
  flex: 1;
}
.side {
  display: flex;
  flex-direction: column;
  width: 367px;
  background: #f7f3f7;
}
.side-head {
  display: flex;
  align-items: center;
  gap: 2px;
  height: 18px;
  padding: 0 2px 0 1px;
}
.side-grip {
  flex: 1;
  height: 6px;
  border: solid #a4a2a6;
  border-width: 1px 0;
  background: #fff;
  box-shadow: 0 1px #fff;
}
.mini {
  display: flex;
  align-items: center;
  justify-content: center;
  width: 12px;
  height: 11px;
  border: 1px solid;
  border-color: #fff #77757a #77757a #fff;
  background: #ebe7ec;
}
.mini svg {
  width: 7px;
  height: 7px;
  stroke: #000;
  stroke-width: 2px;
}
.caret {
  border: 3px solid transparent;
  border-top-color: #8c8a90;
  border-bottom: 0;
}
.tree {
  flex: 1;
  margin: 0;
  padding: 0;
  border-top: 1px solid #98969a;
  border-right: 1px solid #98969a;
  background: #fff;
  list-style: none;
}
.row {
  position: relative;
  display: flex;
  align-items: center;
  height: 20px;
  white-space: nowrap;
}
.guide {
  position: relative;
  flex: none;
  width: 35px;
  height: 20px;
  --dots-y: repeating-linear-gradient(#777 0 1px, transparent 1px 2px);
  --dots-x: repeating-linear-gradient(90deg, #777 0 1px, transparent 1px 2px);
}
.guide.line {
  background: var(--dots-y) 16px 0 / 1px 20px no-repeat;
}
.guide.tee {
  background: var(--dots-y) 16px 0 / 1px 20px no-repeat, var(--dots-x) 16px 10px / 19px 1px no-repeat;
}
.guide.end {
  background: var(--dots-y) 16px 0 / 1px 10px no-repeat, var(--dots-x) 16px 10px / 19px 1px no-repeat;
}
.toggle {
  position: absolute;
  left: 11px;
  top: 5px;
  width: 11px;
  height: 11px;
  border: 1px solid #707070;
  background: linear-gradient(#000, #000) center / 7px 1px no-repeat #fff;
}
.toggle.plus {
  background: linear-gradient(#000, #000) center / 7px 1px no-repeat, linear-gradient(#000, #000) center / 1px 7px no-repeat #fff;
}
.node-ico {
  display: flex;
  flex: none;
  width: 35px;
  padding-left: 8px;
}
.label {
  height: 20px;
  padding: 0 1px;
  border: 1px solid transparent;
  line-height: 18px;
}
.label.bold {
  font-weight: bold;
}
.label.selected {
  border-color: #3c94e4;
}
.row.boxed::after {
  content: "";
  position: absolute;
  left: 105px;
  top: -3px;
  width: 221px;
  height: 28px;
  border: 2px solid #ed1c24;
  z-index: 1;
}

/* workspace */
.work {
  display: flex;
  flex: 1;
  flex-direction: column;
  min-width: 0;
  margin: 1px 0 0 7px;
  border-top: 1px solid #a4a2a6;
  background: #f7f3f7;
}
.work-tools {
  display: flex;
  align-items: center;
  height: 29px;
  padding-left: 6px;
  box-shadow: inset 0 1px #fff;
}
.work-tools .tool.boxed {
  position: relative;
}
.tool.boxed::after {
  content: "";
  position: absolute;
  inset: -4px -5px -5px -3px;
  border: 2px solid #ed1c24;
}
.stage {
  display: flex;
  flex: 1;
  border-top: 2px solid #6c6a6e;
  border-left: 2px solid #6c6a6e;
}
.canvas {
  flex: 1;
  background: #c5c3c6;
}
.canvas h1 {
  margin: 3px 0 0 7px;
  color: #c5c3c6;
  font: italic 20px/24px "Liberation Serif", serif;
  text-shadow: -1px -1px #e4e2e4, 1px 1px #747276;
}
.scroll {
  width: 18px;
  margin-right: -4px;
  border-left: 1px solid #fff;
  background: linear-gradient(90deg, #e6e4e8, #f0eef0 6px, #f7f3f7 8px);
}
.up {
  display: flex;
  align-items: center;
  justify-content: center;
  width: 17px;
  height: 18px;
}
.up::after {
  content: "";
  border: 4px solid transparent;
  border-top: 0;
  border-bottom-color: #333;
}
.thumb {
  display: flex;
  align-items: center;
  justify-content: center;
  width: 17px;
  height: 121px;
  border: 1px solid #949298;
  border-radius: 2px;
  background: linear-gradient(90deg, #fafafa, #eceaee 6px, #c4c4cc 8px, #d4d4dc);
}
.ridges {
  width: 7px;
  height: 9px;
  background: repeating-linear-gradient(#55535a 0 2px, #f4f4f4 2px 4px);
}
</style>
